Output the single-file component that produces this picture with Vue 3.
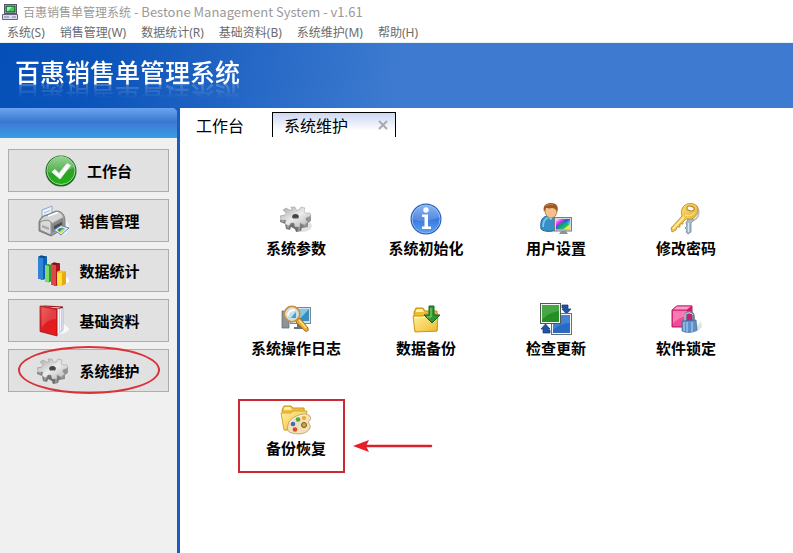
<script setup>
import { ref } from 'vue'

const menus = ['系统(S)', '销售管理(W)', '数据统计(R)', '基础资料(B)', '系统维护(M)', '帮助(H)']

const navItems = [
  { icon: 'check', label: '工作台' },
  { icon: 'printer', label: '销售管理' },
  { icon: 'chart', label: '数据统计' },
  { icon: 'book', label: '基础资料' },
  { icon: 'gear', label: '系统维护', marked: true }
]

const tools = [
  { icon: 'gear', label: '系统参数' },
  { icon: 'info', label: '系统初始化' },
  { icon: 'user', label: '用户设置' },
  { icon: 'key', label: '修改密码' },
  { icon: 'log', label: '系统操作日志' },
  { icon: 'backup', label: '数据备份' },
  { icon: 'update', label: '检查更新' },
  { icon: 'lock', label: '软件锁定' },
  { icon: 'restore', label: '备份恢复', marked: true }
]

const activeTab = ref('系统维护')
</script>

<template>
  <div class="window">
    <svg class="sprite" aria-hidden="true">
      <defs>
        <linearGradient id="g-metal" x1="0" y1="0" x2="1" y2="1">
          <stop offset="0" stop-color="#a4a4a4" />
          <stop offset="0.5" stop-color="#ececec" />
          <stop offset="1" stop-color="#b0b0b0" />
        </linearGradient>
        <linearGradient id="g-side" x1="0" y1="0" x2="1" y2="0">
          <stop offset="0" stop-color="#8c8c8c" />
          <stop offset="0.5" stop-color="#6a6a6a" />
          <stop offset="1" stop-color="#999" />
        </linearGradient>
        <linearGradient id="g-green" x1="0" y1="0" x2="0" y2="1">
          <stop offset="0" stop-color="#7fc878" />
          <stop offset="0.5" stop-color="#2fa02a" />
          <stop offset="1" stop-color="#1fb414" />
        </linearGradient>
        <linearGradient id="g-blue" x1="0" y1="0" x2="0" y2="1">
          <stop offset="0" stop-color="#77a9ee" />
          <stop offset="0.5" stop-color="#3878dc" />
          <stop offset="1" stop-color="#5ba0f5" />
        </linearGradient>
        <linearGradient id="g-folder" x1="0" y1="0" x2="1" y2="1">
          <stop offset="0" stop-color="#fff2a0" />
          <stop offset="1" stop-color="#f0b92c" />
        </linearGradient>
        <linearGradient id="g-gold" x1="0" y1="0" x2="1" y2="1">
          <stop offset="0" stop-color="#ffe98a" />
          <stop offset="1" stop-color="#e0a21c" />
        </linearGradient>
        <linearGradient id="g-red" x1="0" y1="0" x2="1" y2="1">
          <stop offset="0" stop-color="#f04848" />
          <stop offset="0.5" stop-color="#dc1e22" />
          <stop offset="1" stop-color="#f01818" />
        </linearGradient>
        <linearGradient id="g-rainbow" x1="0" y1="0" x2="1" y2="1">
          <stop offset="0" stop-color="#f6f8ff" />
          <stop offset="0.25" stop-color="#e83cf0" />
          <stop offset="0.45" stop-color="#3448ee" />
          <stop offset="0.65" stop-color="#22d8e8" />
          <stop offset="0.82" stop-color="#3ee04a" />
          <stop offset="1" stop-color="#e8f060" />
        </linearGradient>
      </defs>

      <symbol id="i-check" viewBox="0 0 32 32">
        <circle cx="16" cy="16" r="15.5" fill="#1d6b22" />
        <circle cx="16" cy="15.5" r="14" fill="url(#g-green)" stroke="#9bd896" />
        <path d="M3 17C9 19 20 18 29 12C28 6 22 2 16 2C8 2 3 8 3 17Z" fill="#fff" opacity="0.2" />
        <path d="M7 17L10 14.500L14 18.500L22 8.500L25.500 10.500L15 24Z" fill="#fff" stroke="#e8efe8" stroke-linejoin="round" />
      </symbol>

      <symbol id="i-printer" viewBox="0 0 32 32">
        <ellipse cx="24" cy="22" rx="8" ry="8" fill="#f4f4f8" />
        <path d="M5 5L15 1L15 13L5 16Z" fill="#eaf2fc" stroke="#8ba6c8" />
        <path d="M7 8L13 5.500M7 11L13 8.500" stroke="#a4bde0" />
        <path d="M2 17C4 11 8 10 10 10L19 6C26 6 28 11 28 17L28 23L14 31L2 26Z" fill="#a0a0a0" stroke="#6a6a6a" stroke-width="0.800" />
        <path d="M3 17C6 11 9 11 11 11L19 7C23 7 25 9 26 12L15 18C13 14 7 15 3 17Z" fill="#d5d5d5" />
        <path d="M11 11L21 7.500" stroke="#fff" stroke-width="1.500" />
        <path d="M3 17C7 15 13 14 14 18L14 30L3 25Z" fill="#d9dadc" stroke="#707070" stroke-width="0.700" />
        <path d="M5 20L12 22.500L12 25L5 22.500Z" fill="#a8a8aa" />
        <path d="M15 19L26 13L27 21L15 28Z" fill="#868688" />
        <path d="M17 21L25 17L25 20L17 25Z" fill="#4a4a4c" />
        <path d="M17 25L24 20.500L32 23L24 30Z" fill="#dceafa" stroke="#6684ad" />
        <path d="M20 25L25 22.500L28 24L23 27.500Z" fill="#46a848" />
        <path d="M23 25L27 24L26 27L23 28Z" fill="#e2d53c" />
        <circle cx="23" cy="24.500" r="1.300" fill="#2774cd" />
      </symbol>

      <symbol id="i-chart" viewBox="0 0 32 32">
        <path d="M10 28L30 22L33 26L26 31Z" fill="#fafafa" />
        <path d="M1 2L4 0.500L10 1.500L10 23L6 25L1 23.500Z" fill="#0c62b8" />
        <path d="M1 2L6 3L6 25L1 23.500Z" fill="#2f84d6" />
        <path d="M1 2L4 0.500L10 1.500L6 3Z" fill="#0b4a92" />
        <path d="M8 10L11 9L15 10L15 26L12 27.500L8 26.500Z" fill="#2c9a30" />
        <path d="M8 10L12 11L12 27.500L8 26.500Z" fill="#82d66b" />
        <path d="M14 9L17 7.500L23 8.500L23 29L19 31L14 29.500Z" fill="#ad1518" />
        <path d="M14 9L19 10L19 31L14 29.500Z" fill="#dc4848" />
        <path d="M14 9L17 7.500L23 8.500L19 10Z" fill="#7d1016" />
        <path d="M20 17L23 15.500L29 16.500L29 29L25 31L20 29.500Z" fill="#e7a90f" />
        <path d="M20 17L25 18L25 31L20 29.500Z" fill="#ffe33a" />
        <path d="M20 17L23 15.500L29 16.500L25 18Z" fill="#f4c22a" />
      </symbol>

      <symbol id="i-book" viewBox="0 0 32 32">
        <path d="M20 30L27 19L33 24L28 28Z" fill="#f8f8fa" />
        <path d="M20 4L26 2.500L26 25L20 30Z" fill="#f2f4fb" stroke="#a9aec0" stroke-width="0.800" />
        <path d="M22.500 4V27M24.500 4V26" stroke="#b9bfd2" stroke-width="0.700" />
        <path d="M3 1L8 0.500L26 1.500L26 3L20 4Z" fill="#9c1013" />
        <path d="M6 1.500L24 2.500L20 3.500Z" fill="#f4e5e5" />
        <path d="M3 1L20 4L20 31L3 26.500Z" fill="url(#g-red)" stroke="#8d1012" stroke-width="0.700" />
        <path d="M5 2.500L19 5V14C14 14 8 17 5 22Z" fill="#fff" opacity="0.150" />
      </symbol>

      <symbol id="i-gear" viewBox="0 0 32 32">
        <ellipse cx="22" cy="23" rx="10" ry="6" fill="#e2e2e2" />
        <path d="M0 13V19L5 21L6 26L10 27L11 24L15 26L16 29L21 28L22 25L28 24V20L31 18V12L16 10Z" fill="url(#g-side)" />
        <path d="M3 16V19M8 21V25M19 24V28M25 20V23" stroke="#b4b4b4" />
        <path d="M11 4H15L16 7L19 7L21 4L25 5L24 9L26 10L30 10L31 13L26 15L26 17L28 19L24 22L20 20L20 24L15 24L14 20L11 20L9 23L5 21L6 17L0 17V13L5 12L6 10L3 7L6 5L10 7L12 7Z" fill="url(#g-metal)" stroke="#9c9c9c" stroke-width="0.500" stroke-linejoin="round" />
        <ellipse cx="15.500" cy="13.500" rx="3.300" ry="2.600" fill="#444" />
        <path d="M13 14.500C14 17 17 17 18 14.500C17 15.500 14 15.500 13 14.500Z" fill="#c4c4c4" />
      </symbol>

      <symbol id="i-info" viewBox="0 0 32 32">
        <circle cx="16" cy="16" r="15.500" fill="#2c62b6" />
        <circle cx="16" cy="16" r="14" fill="url(#g-blue)" stroke="#8ab8f4" />
        <path d="M2 16C8 19 23 18 30 14C29 6 23 2 16 2C8 2 2 8 2 16Z" fill="#fff" opacity="0.150" />
        <circle cx="16" cy="7" r="2.700" fill="#fff" />
        <path d="M12 11.500H18V23.500H21V26H12V23.500H14.500V14H12Z" fill="#fff" />
      </symbol>

      <symbol id="i-user" viewBox="0 0 32 32">
        <path d="M1 26C0 18 2 14 7 13H13C16 14 17 19 16 27C12 29 4 29 1 26Z" fill="#368fc6" stroke="#1b669d" />
        <path d="M3 24C3 19 5 15 8 15" fill="none" stroke="#77c3eb" stroke-width="2" />
        <path d="M7 13L11 17L13 13Z" fill="#e4f0fa" />
        <ellipse cx="11" cy="8" rx="6" ry="7" fill="#f4c18d" stroke="#9f6736" stroke-width="0.700" />
        <path d="M4 9C2 2 7 0 11 0C17 0 19 4 17 9C16 6 14 5 12 5C9 6 7 5 6 5C5 6 5 8 4 9Z" fill="#9c5923" />
        <path d="M6 3C8 1 11 1 13 2" fill="none" stroke="#cb8649" />
        <rect x="14.500" y="14.500" width="17" height="13.500" fill="#d4d8da" stroke="#777f84" />
        <rect x="16" y="16" width="14" height="10.500" fill="url(#g-rainbow)" />
        <path d="M17 26C18 20 23 18 28 20L30 26.500H24Z" fill="#12b04c" opacity="0.700" />
        <path d="M23 26.500L30 21V26.500Z" fill="#f2e837" />
        <path d="M21 28H26L28 31H19Z" fill="#8b9499" />
      </symbol>

      <symbol id="i-key" viewBox="0 0 32 32">
        <path d="M20 13L24 17L21 20L21 29L18 31L16 29L17 27L15 25L17 23L16 20Z" fill="#a6bed1" stroke="#6b8498" stroke-width="0.800" />
        <path d="M18.500 20V29" stroke="#dceaf4" />
        <path d="M25 3C30 6 30 14 24 17" fill="none" stroke="#b8c5ce" stroke-width="2" />
        <path d="M13 4C16 0 23 -1 27 3C30 8 26 14 22 16C19 17 17 16 16 16L13 19L13 21L10 21L10 24L7 24L6 27L2 29L1 25L12 13C11 10 11 7 13 4Z" fill="url(#g-gold)" stroke="#b98620" stroke-width="0.800" />
        <path d="M3 26L14 14" stroke="#fff2a9" stroke-width="1.500" />
        <ellipse cx="20.500" cy="5.500" rx="3.700" ry="2.300" fill="#fff" stroke="#ad7915" transform="rotate(18 20.500 5.500)" />
        <path d="M15 12C19 14 23 12 25 9" fill="none" stroke="#ffec93" />
      </symbol>

      <symbol id="i-log" viewBox="0 0 32 32">
        <path d="M2 8H9V25H2Z" fill="#8b939b" stroke="#5c656c" stroke-width="0.700" />
        <path d="M4 10H7M4 13H7" stroke="#e5e9ec" />
        <rect x="10.500" y="4.500" width="20" height="16" fill="#d4dde4" stroke="#798b98" />
        <rect x="13" y="6" width="16" height="12" fill="#378ebf" />
        <path d="M13 6H29L18 18H13Z" fill="#80c8e7" />
        <path d="M17 21H24V24H28V26H14V24H17Z" fill="#68737b" />
        <path d="M17 17L20 15L28 25C29 28 27 29 25 28L16 19Z" fill="#e9aa31" stroke="#936015" stroke-width="0.800" />
        <path d="M19 17L26 25" stroke="#ffe38d" stroke-width="1.500" />
        <circle cx="12" cy="11" r="7.500" fill="#c4e3f2" fill-opacity="0.900" stroke="#c88f49" stroke-width="2" />
        <circle cx="12" cy="11" r="6.300" fill="none" stroke="#f6dcb1" />
        <path d="M8 13C8 9 11 7 15 7" stroke="#fff" stroke-width="2" fill="none" />
        <path d="M11 15H16V9L13 12Z" fill="#589dbc" />
      </symbol>

      <symbol id="i-folder" viewBox="0 0 32 32">
        <path d="M4 9L6 5H13L15 8H27V28H5Z" fill="#eebb34" stroke="#c28c16" />
        <path d="M6 9V7L8 6H12L14 9Z" fill="#fff1a0" />
        <path d="M3 13L13 13L15 11H28L27 28L5 29Z" fill="url(#g-folder)" stroke="#cd981d" />
        <path d="M4.500 14.500H14L16 12.500H27" fill="none" stroke="#fff8ca" />
      </symbol>

      <symbol id="i-backup" viewBox="0 0 32 32">
        <use href="#i-folder" />
        <path d="M19 3H24V12H30L22 20L14 12H19Z" fill="#2b9834" stroke="#126520" stroke-linejoin="round" />
        <path d="M21 5V14H17" fill="none" stroke="#8edb70" />
      </symbol>

      <symbol id="i-update" viewBox="0 0 32 32">
        <path d="M22 2H28V6H31L26.500 11L22 6H24V5H22Z" fill="#2252a4" stroke="#14346f" stroke-width="0.700" />
        <path d="M10 30H3V26H1L5.500 21L10 26H8V27H10Z" fill="#2252a4" stroke="#14346f" stroke-width="0.700" />
        <rect x="11.500" y="10.500" width="20" height="21" fill="#f4f6f8" stroke="#657078" />
        <rect x="13" y="12" width="17" height="18" fill="#296bc3" />
        <path d="M13 12H30V20C23 20 17 23 13 27Z" fill="#5793dd" opacity="0.600" />
        <rect x="0.500" y="0.500" width="20" height="20" fill="#f4f6f4" stroke="#4e5a50" />
        <rect x="2" y="2" width="17" height="17" fill="#229025" />
        <path d="M2 2H19V8C12 9 6 12 2 17Z" fill="#63b85a" opacity="0.600" />
      </symbol>

      <symbol id="i-lock" viewBox="0 0 32 32">
        <path d="M24 27L31 18L32 24L27 29Z" fill="#dfe4e9" />
        <path d="M2 7L7 3H22L22 18L17 24H2Z" fill="#df3785" stroke="#b91b62" />
        <path d="M2 7L7 3H22L17 7Z" fill="#ff9ac8" stroke="#cb2e74" />
        <path d="M3 8H17V23H3Z" fill="#ee4b98" />
        <path d="M3 8H17V13C11 14 6 17 3 21Z" fill="#ff98c4" opacity="0.600" />
        <path d="M17 7L22 3V18L17 24Z" fill="#ca1e6e" />
        <path d="M15.500 19V13C15.500 8 23.500 8 23.500 13V19" fill="none" stroke="#667e94" stroke-width="2.500" />
        <path d="M15 18V13C15 9 22 9 23 12" fill="none" stroke="#d5e0eb" />
        <path d="M12 18L26 17L27 27C23 30 16 30 12 28Z" fill="#5c91c9" stroke="#376697" stroke-width="0.700" />
        <path d="M14 19V28M17 19V29M22 19V29" stroke="#b6daf5" />
      </symbol>

      <symbol id="i-restore" viewBox="0 0 32 32">
        <path d="M2 7L4 3H11L13 5H24L25 24L5 27Z" fill="#efbd3d" stroke="#c99822" />
        <path d="M4 7V5L5 4H10L12 7Z" fill="#fff1a5" />
        <path d="M1 10H11L13 8H27L24 26L4 27Z" fill="url(#g-folder)" stroke="#d5a735" />
        <path d="M9 19C12 14 20 11 26 11C31 12 32 16 29 18C27 20 31 21 30 25C27 31 19 32 12 30C6 29 7 24 9 19Z" fill="#f5dfb4" stroke="#b59768" stroke-width="0.800" />
        <path d="M10 20C14 14 21 12 26 12" fill="none" stroke="#fff6df" />
        <circle cx="18" cy="16.500" r="2.300" fill="#4aac43" />
        <circle cx="24" cy="15" r="2" fill="#e9ad22" />
        <circle cx="13" cy="21" r="2.300" fill="#4268c8" />
        <circle cx="15" cy="26.500" r="2.300" fill="#d14a31" />
        <circle cx="24" cy="22" r="2.500" fill="#c2ab48" stroke="#6e5a28" />
      </symbol>
    </svg>

    <header class="title-bar">
      <svg class="app-icon" viewBox="0 0 16 16" aria-hidden="true">
        <rect x="2.500" y="0.500" width="12" height="9" fill="#d8d8ee" stroke="#54546c" />
        <rect x="4" y="2" width="9" height="6" fill="#3ccb59" stroke="#1a3d25" />
        <path d="M5 3H10L6 7H5Z" fill="#a2f4ae" />
        <path d="M0.500 10.500H15.500V15.500H0.500Z" fill="#dadaf0" stroke="#65657d" />
        <path d="M2 13H7M10 13H14" stroke="#7c7c9c" />
      </svg>
      <div>百惠销售单管理系统<span class="latin"> - Bestone Management System - v1.61</span></div>
    </header>

    <nav class="menu-bar">
      <button v-for="menu in menus" :key="menu" type="button">{{ menu }}</button>
    </nav>

    <div class="banner">
      <h1>百惠销售单管理系统</h1>
    </div>

    <div class="body">
      <aside class="sidebar">
        <div class="sidebar-head"></div>
        <div class="nav">
          <button v-for="item in navItems" :key="item.label" type="button" class="nav-button">
            <svg class="icon" aria-hidden="true"><use :href="'#i-' + item.icon" /></svg>
            <span>{{ item.label }}</span>
            <span v-if="item.marked" class="ellipse-mark"></span>
          </button>
        </div>
      </aside>

      <main class="content">
        <div class="tabs">
          <button type="button" class="tab" :class="{ active: activeTab === '工作台' }" @click="activeTab = '工作台'">工作台</button>
          <div class="tab closable" :class="{ active: activeTab === '系统维护' }">
            <button type="button" class="tab-label" @click="activeTab = '系统维护'">系统维护</button>
            <button type="button" class="tab-close" aria-label="关闭">
              <svg viewBox="0 0 10 10"><path d="M1 1L9 9M9 1L1 9" /></svg>
            </button>
          </div>
        </div>

        <div class="tools">
          <div v-for="tool in tools" :key="tool.label" class="cell">
            <button type="button" class="tool">
              <svg class="icon" aria-hidden="true"><use :href="'#i-' + tool.icon" /></svg>
              <span>{{ tool.label }}</span>
            </button>
            <template v-if="tool.marked">
              <span class="box-mark"></span>
              <svg class="arrow-mark" viewBox="0 0 80 14" aria-hidden="true">
                <path d="M12 7H78" stroke="#d8222c" stroke-width="2.500" stroke-linecap="round" />
                <path d="M0 7L16 1L13 7L16 13Z" fill="#e81c28" />
              </svg>
            </template>
          </div>
        </div>
      </main>
    </div>
  </div>
</template>

<style>
body {
  margin: 0;
  background: #fff;
}
</style>

<style scoped>
.window {
  display: flex;
  flex-direction: column;
  min-height: 100vh;
  font-family: "Noto Sans CJK SC", sans-serif;
  color: #000;
}
button {
  margin: 0;
  padding: 0;
  border: 0;
  background: none;
  font: inherit;
  color: inherit;
  white-space: nowrap;
}
.sprite {
  position: absolute;
  width: 0;
  height: 0;
}
.icon {
  width: 32px;
  height: 32px;
  flex: none;
  overflow: visible;
}
.title-bar {
  display: flex;
  align-items: center;
  gap: 5px;
  height: 24px;
  padding-left: 2px;
  font-size: 12px;
  line-height: 18px;
  color: #999;
}
.latin {
  font-size: 13px;
}
.app-icon {
  width: 16px;
  height: 16px;
}
.menu-bar {
  display: flex;
  gap: 15px;
  height: 18px;
  padding-left: 7px;
  border-bottom: 1px solid #e8f1f5;
  font-family: "Noto Sans", "Noto Sans CJK SC", sans-serif;
  font-size: 12px;
  line-height: 18px;
  color: #6c6c6c;
}
.banner {
  height: 65px;
  padding-left: 15px;
  background: linear-gradient(100deg, #0550b8 0, #0b54bb 100px, #3e7bd0 400px);
}
.banner h1 {
  width: max-content;
  margin: 0;
  padding-top: 10px;
  font-size: 25px;
  font-weight: 500;
  line-height: 36px;
  color: #fff;
  -webkit-box-reflect: below -11px linear-gradient(transparent 55%, rgba(255, 255, 255, 0.3));
}
.body {
  display: flex;
  flex: 1;
}
.sidebar {
  flex: none;
  width: 177px;
  border-right: 3px solid #1b5cbc;
  background: #f0f0f0;
}
.sidebar-head {
  height: 30px;
  background: radial-gradient(circle at 0 100%, transparent 6px, #1b5cbc 7px) right top / 6px 6px no-repeat,
    linear-gradient(#6ba5f0, #3a78d2 45%, #3f80d8 60%, #36a0e4);
}
.nav {
  display: flex;
  flex-direction: column;
  gap: 7px;
  padding: 11px 8px;
}
.nav-button {
  position: relative;
  display: flex;
  align-items: center;
  justify-content: center;
  gap: 10px;
  height: 43px;
  border: 1px solid #adadad;
  background: #e1e1e1;
  font-size: 15px;
  font-weight: 700;
}
.ellipse-mark {
  position: absolute;
  inset: -4px 8px -3px 9px;
  border: 2px solid #d8323a;
  border-radius: 50%;
}
.content {
  flex: 1;
  min-width: 0;
  background: #fff;
}
.tabs {
  display: flex;
  gap: 28px;
  padding: 4px 16px 0;
  font-size: 16px;
  line-height: 24px;
}
.tab {
  height: 25px;
}
.closable {
  display: flex;
  align-items: center;
  justify-content: space-between;
  box-sizing: border-box;
  width: 124px;
  padding: 0 7px 0 11px;
}
.closable.active {
  border: 1px solid #000;
  border-bottom: 0;
  background: linear-gradient(#cdd7f2, #fff 75%);
}
.tab-close {
  display: flex;
}
.tab-close svg {
  width: 10px;
  height: 10px;
  fill: none;
  stroke: #aaa;
  stroke-width: 2;
}
.tools {
  display: grid;
  grid-template-columns: repeat(4, 130px);
  grid-auto-rows: 100px;
  padding: 63px 0 0 51px;
}
.cell {
  position: relative;
}
.tool {
  display: flex;
  flex-direction: column;
  align-items: center;
  gap: 2px;
  width: 100%;
  padding-top: 3px;
  font-size: 15px;
  font-weight: 700;
  line-height: 22px;
}
.box-mark {
  position: absolute;
  top: -1px;
  left: 7px;
  width: 103px;
  height: 70px;
  border: 2px solid #cb2a35;
}
.arrow-mark {
  position: absolute;
  top: 39px;
  left: 122px;
  width: 80px;
  height: 14px;
}
</style>
